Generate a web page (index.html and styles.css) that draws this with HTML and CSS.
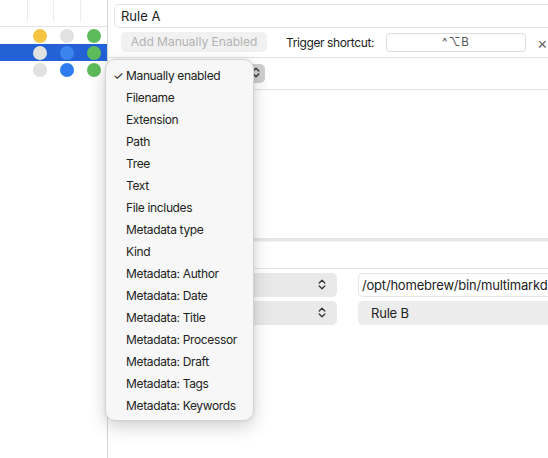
FILE: index.html
```html
<!DOCTYPE html>
<html>
<head>
<meta charset="utf-8">
<link rel="stylesheet" href="styles.css">
</head>
<body>
<div class="app">
  <aside class="sidebar">
    <div class="grid-head">
      <span class="hc"></span><span class="hc"></span><span class="hc"></span><span class="hc last"></span>
    </div>
    <div class="grid-row">
      <span class="cell"></span>
      <span class="cell"><i class="dot yellow"></i></span>
      <span class="cell"><i class="dot gray"></i></span>
      <span class="cell"><i class="dot green"></i></span>
    </div>
    <div class="grid-row selected">
      <span class="cell"></span>
      <span class="cell"><i class="dot gray"></i></span>
      <span class="cell"><i class="dot blue-light"></i></span>
      <span class="cell"><i class="dot green"></i></span>
    </div>
    <div class="grid-row">
      <span class="cell"></span>
      <span class="cell"><i class="dot gray"></i></span>
      <span class="cell"><i class="dot blue"></i></span>
      <span class="cell"><i class="dot green"></i></span>
    </div>
  </aside>
  <main class="pane">
    <div class="name-row">
      <div class="name-field">Rule A</div>
    </div>
    <div class="action-row">
      <button class="btn-disabled">Add Manually Enabled</button>
      <span class="label">Trigger shortcut:</span>
      <div class="shortcut">^⌥B</div>
      <span class="clear">×</span>
    </div>
    <div class="cond-row">
      <div class="popup small"><span class="chev">
        <svg width="8" height="11" viewBox="0 0 8 11"><path d="M1.2 4 L4 1.3 L6.8 4 M1.2 7 L4 9.7 L6.8 7" fill="none" stroke="#333" stroke-width="1.3" stroke-linecap="round" stroke-linejoin="round"/></svg>
      </span></div>
    </div>
    <div class="cond-space"></div>
    <div class="splitter"></div>
    <div class="sub-head"></div>
    <div class="form-row">
      <div class="popup wide"><span class="chev">
        <svg width="8" height="11" viewBox="0 0 8 11"><path d="M1.2 4 L4 1.3 L6.8 4 M1.2 7 L4 9.7 L6.8 7" fill="none" stroke="#333" stroke-width="1.3" stroke-linecap="round" stroke-linejoin="round"/></svg>
      </span></div>
      <div class="field">/opt/homebrew/bin/multimarkd</div>
    </div>
    <div class="form-row">
      <div class="popup wide"><span class="chev">
        <svg width="8" height="11" viewBox="0 0 8 11"><path d="M1.2 4 L4 1.3 L6.8 4 M1.2 7 L4 9.7 L6.8 7" fill="none" stroke="#333" stroke-width="1.3" stroke-linecap="round" stroke-linejoin="round"/></svg>
      </span></div>
      <div class="field gray">Rule B</div>
    </div>
  </main>
</div>
<div class="menu">
  <div class="item checked"><span class="check">✓</span>Manually enabled</div>
  <div class="item">Filename</div>
  <div class="item">Extension</div>
  <div class="item">Path</div>
  <div class="item">Tree</div>
  <div class="item">Text</div>
  <div class="item">File includes</div>
  <div class="item">Metadata type</div>
  <div class="item">Kind</div>
  <div class="item">Metadata: Author</div>
  <div class="item">Metadata: Date</div>
  <div class="item">Metadata: Title</div>
  <div class="item">Metadata: Processor</div>
  <div class="item">Metadata: Draft</div>
  <div class="item">Metadata: Tags</div>
  <div class="item">Metadata: Keywords</div>
</div>
</body>
</html>
```
FILE: styles.css
```css
* { box-sizing: border-box; }
html, body {
  margin: 0;
  padding: 0;
  background: #ffffff;
  width: 548px;
  height: 458px;
  overflow: hidden;
  font-family: "Inter", "Liberation Sans", sans-serif;
  font-size: 12px;
  color: #222;
}
.app {
  display: flex;
  width: 548px;
  height: 458px;
}
.sidebar {
  width: 108px;
  flex: none;
  border-right: 1px solid #d6d6d6;
  background: #fff;
}
.grid-head {
  display: flex;
  height: 27px;
  border-bottom: 1px solid #e4e4e4;
}
.hc {
  width: 27px;
  height: 22px;
  border-right: 1px solid #ececec;
}
.hc:first-child { width: 29px; }
.hc.last { border-right: none; }
.grid-row {
  display: flex;
  height: 17px;
  align-items: center;
}
.grid-row.selected { background: #2461d6; }
.cell {
  width: 27px;
  display: flex;
  justify-content: center;
  align-items: center;
}
.dot {
  display: block;
  width: 14px;
  height: 14px;
  border-radius: 50%;
}
.yellow { background: #f6c443; }
.gray { background: #e1e1e1; }
.green { background: #5dbb5b; }
.blue { background: #2f7cf1; }
.blue-light { background: #3b84ee; }

.pane {
  flex: 1;
  overflow: hidden;
  min-width: 0;
}
.name-row {
  padding: 4px 0 0 6px;
}
.name-field {
  width: 460px;
  height: 24px;
  border: 1px solid #e6e6e6;
  border-right: none;
  border-radius: 5px 0 0 5px;
  padding: 3px 0 0 6px;
  font-size: 13px;
  color: #1e1e1e;
}
.action-row {
  display: flex;
  align-items: center;
  height: 30px;
  border-bottom: 1px solid #e2e2e2;
  padding-left: 13px;
  white-space: nowrap;
}
.action-row > * { flex: none; }
.btn-disabled {
  font: inherit;
  font-size: 12px;
  border: none;
  background: #f1f1f1;
  color: #b3b3b3;
  border-radius: 5px;
  width: 146px;
  height: 20px;
  padding: 0;
  margin-top: -2px;
}
.label {
  margin-left: 19px;
  color: #222;
  letter-spacing: -0.4px;
}
.shortcut {
  margin-left: 12px;
  width: 140px;
  height: 19px;
  border: 1px solid #dcdcdc;
  border-radius: 4px;
  text-align: center;
  color: #555;
  line-height: 17px;
  font-size: 11.5px;
  letter-spacing: 1px;
}
.clear {
  margin-left: 11px;
  font-size: 16px;
  color: #666;
  line-height: 1;
}
.cond-row {
  height: 32px;
  border-bottom: 1px solid #e3e3e3;
  display: flex;
  align-items: center;
  padding-left: 100px;
}
.popup {
  flex: none;
  background: #e9e9e9;
  border-radius: 5px;
  display: flex;
  align-items: center;
  justify-content: flex-end;
}
.popup.small {
  width: 57px;
  height: 19px;
  background: #cfcfcf;
  padding-right: 5px;
}
.cond-space { height: 148px; }
.splitter {
  height: 4px;
  background: #e6e6e6;
  border-bottom: 1px solid #f3f3f3;
}
.sub-head {
  height: 27px;
  border-bottom: 1px solid #e6e6e6;
}
.form-row {
  display: flex;
  align-items: center;
  margin-top: 4px;
  height: 24px;
  padding-left: 8px;
  gap: 21px;
  margin-bottom: 4px;
}
.popup.wide {
  width: 221px;
  height: 24px;
  padding-right: 11px;
}
.field {
  flex: none;
  width: 200px;
  height: 24px;
  border: 1px solid #e5e5e5;
  border-right: none;
  border-radius: 5px 0 0 5px;
  padding-left: 3px;
  line-height: 22px;
  font-size: 13px;
  letter-spacing: -0.2px;
  color: #222;
  white-space: nowrap;
  overflow: hidden;
}
.field.gray {
  background: #ececec;
  border-color: #ececec;
  padding-left: 12px;
}

.menu {
  position: absolute;
  left: 105px;
  top: 59px;
  width: 149px;
  height: 362px;
  background: #f7f7f7;
  border: 1px solid #d2d2d2;
  border-radius: 10px;
  box-shadow: 0 6px 18px rgba(0,0,0,0.18), 0 0 4px rgba(0,0,0,0.06);
  padding-top: 5px;
}
.item {
  height: 22px;
  line-height: 22px;
  padding-left: 20px;
  font-size: 12px;
  letter-spacing: -0.35px;
  color: #222;
  position: relative;
  white-space: nowrap;
}
.check {
  position: absolute;
  left: 7px;
  top: 0;
  font-size: 12px;
}
```
